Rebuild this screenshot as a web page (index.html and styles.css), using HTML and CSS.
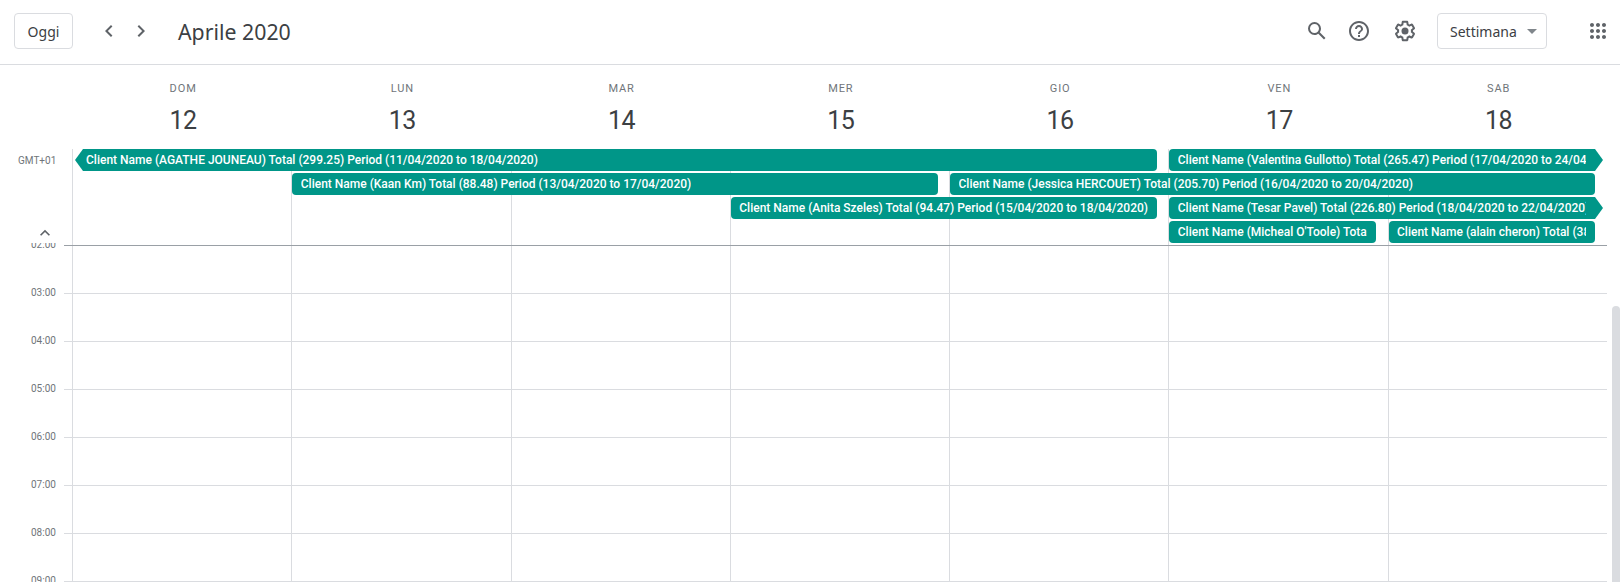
FILE: index.html
```html
<!DOCTYPE html>
<html lang="it">
<head>
<meta charset="utf-8">
<title>Calendario</title>
<link rel="stylesheet" href="styles.css">
</head>
<body>
<header class="toolbar">
  <button class="btn today">Oggi</button>
  <div class="nav">
    <svg class="nav-icon" viewBox="0 0 24 24"><path d="M15.41 7.41L14 6l-6 6 6 6 1.41-1.41L10.83 12z"/></svg>
    <svg class="nav-icon" viewBox="0 0 24 24"><path d="M10 6L8.59 7.41 13.17 12l-4.58 4.59L10 18l6-6z"/></svg>
  </div>
  <h1 class="title">Aprile 2020</h1>
  <div class="tools">
    <svg class="tool" viewBox="0 0 24 24"><path d="M20.49 19l-5.73-5.73C15.53 12.2 16 10.91 16 9.5A6.5 6.5 0 1 0 9.5 16c1.41 0 2.7-.47 3.77-1.24L19 20.49 20.49 19zM5 9.5C5 7.01 7.01 5 9.5 5S14 7.01 14 9.5 11.99 14 9.5 14 5 11.99 5 9.5z"/></svg>
    <svg class="tool tool-help" viewBox="0 0 24 24"><path d="M11 18h2v-2h-2v2zm1-16C6.48 2 2 6.48 2 12s4.48 10 10 10 10-4.48 10-10S17.52 2 12 2zm0 18c-4.41 0-8-3.59-8-8s3.59-8 8-8 8 3.59 8 8-3.59 8-8 8zm0-14c-2.21 0-4 1.79-4 4h2c0-1.1.9-2 2-2s2 .9 2 2c0 2-3 1.75-3 5h2c0-2.25 3-2.5 3-5 0-2.21-1.79-4-4-4z"/></svg>
    <svg class="tool" viewBox="0 0 24 24"><path d="M13.85 22.25h-3.7c-.74 0-1.36-.54-1.45-1.27l-.27-1.89c-.27-.14-.53-.29-.79-.46l-1.8.72c-.7.26-1.47-.03-1.81-.65L2.2 15.53c-.35-.66-.2-1.44.36-1.88l1.53-1.19c-.01-.15-.02-.3-.02-.46 0-.15.01-.31.02-.46l-1.52-1.19c-.59-.45-.74-1.26-.37-1.88l1.85-3.19c.34-.62 1.11-.9 1.79-.63l1.81.73c.26-.17.52-.32.78-.46l.27-1.91c.09-.7.71-1.25 1.44-1.25h3.7c.74 0 1.36.54 1.45 1.27l.27 1.89c.27.14.53.29.79.46l1.8-.72c.71-.26 1.48.03 1.82.65l1.84 3.18c.36.66.2 1.44-.36 1.88l-1.52 1.19c.01.15.02.3.02.46s-.01.31-.02.46l1.52 1.19c.56.45.72 1.23.37 1.86l-1.86 3.22c-.34.62-1.11.9-1.8.63l-1.8-.72c-.26.17-.52.32-.78.46l-.27 1.91c-.1.68-.72 1.22-1.45 1.22zm-3.23-2h2.76l.37-2.55.53-.22c.44-.18.88-.44 1.34-.78l.45-.34 2.38.96 1.38-2.4-2.03-1.58.07-.56c.03-.26.06-.51.06-.78s-.03-.53-.06-.78l-.07-.56 2.03-1.58-1.39-2.4-2.39.96-.45-.35c-.42-.32-.87-.58-1.33-.77l-.52-.22-.37-2.55h-2.76l-.37 2.55-.53.21c-.44.19-.88.44-1.34.79l-.45.33-2.38-.95-1.39 2.39 2.03 1.58-.07.56a7 7 0 0 0-.06.79c0 .26.02.53.06.78l.07.56-2.03 1.58 1.38 2.4 2.39-.96.45.35c.43.33.86.58 1.33.77l.53.22.38 2.55z"/><circle cx="12" cy="12" r="3.5"/></svg>
  </div>
  <button class="btn view"><span>Settimana</span><i class="caret"></i></button>
  <svg class="apps" viewBox="0 0 24 24"><path d="M6 8c1.1 0 2-.9 2-2s-.9-2-2-2-2 .9-2 2 .9 2 2 2zm6 12c1.1 0 2-.9 2-2s-.9-2-2-2-2 .9-2 2 .9 2 2 2zm-6 0c1.1 0 2-.9 2-2s-.9-2-2-2-2 .9-2 2 .9 2 2 2zm0-6c1.1 0 2-.9 2-2s-.9-2-2-2-2 .9-2 2 .9 2 2 2zm6 0c1.1 0 2-.9 2-2s-.9-2-2-2-2 .9-2 2 .9 2 2 2zm4-8c0 1.1.9 2 2 2s2-.9 2-2-.9-2-2-2-2 .9-2 2zm-4 2c1.1 0 2-.9 2-2s-.9-2-2-2-2 .9-2 2 .9 2 2 2zm6 6c1.1 0 2-.9 2-2s-.9-2-2-2-2 .9-2 2 .9 2 2 2zm0 6c1.1 0 2-.9 2-2s-.9-2-2-2-2 .9-2 2 .9 2 2 2z"/></svg>
</header>

<section class="days">
  <div class="day"><span class="dow">DOM</span><span class="num">12</span></div>
  <div class="day"><span class="dow">LUN</span><span class="num">13</span></div>
  <div class="day"><span class="dow">MAR</span><span class="num">14</span></div>
  <div class="day"><span class="dow">MER</span><span class="num">15</span></div>
  <div class="day"><span class="dow">GIO</span><span class="num">16</span></div>
  <div class="day"><span class="dow">VEN</span><span class="num">17</span></div>
  <div class="day"><span class="dow">SAB</span><span class="num">18</span></div>
</section>

<section class="allday">
  <div class="gutter">
    <span class="tz">GMT+01</span>
    <svg class="collapse" viewBox="0 0 24 24"><path d="M12 8l-6 6 1.41 1.41L12 10.83l4.59 4.58L18 14z"/></svg>
  </div>
  <div class="events">
    <div class="col c1"></div><div class="col c2"></div><div class="col c3"></div><div class="col c4"></div><div class="col c5"></div><div class="col c6"></div><div class="col c7"></div>
    <div class="ev from-prev r1 s1 e6"><span>Client Name (AGATHE JOUNEAU) Total (299.25) Period (11/04/2020 to 18/04/2020)</span></div>
    <div class="ev to-next r1 s6 e8"><span>Client Name (Valentina Gullotto) Total (265.47) Period (17/04/2020 to 24/04/2020)</span></div>
    <div class="ev r2 s2 e5"><span>Client Name (Kaan Km) Total (88.48) Period (13/04/2020 to 17/04/2020)</span></div>
    <div class="ev r2 s5 e8"><span>Client Name (Jessica HERCOUET) Total (205.70) Period (16/04/2020 to 20/04/2020)</span></div>
    <div class="ev r3 s4 e6"><span>Client Name (Anita Szeles) Total (94.47) Period (15/04/2020 to 18/04/2020)</span></div>
    <div class="ev to-next r3 s6 e8"><span>Client Name (Tesar Pavel) Total (226.80) Period (18/04/2020 to 22/04/2020)</span></div>
    <div class="ev r4 s6 e7"><span>Client Name (Micheal O'Toole) Total (120.00) Period (17/04/2020 to 18/04/2020)</span></div>
    <div class="ev r4 s7 e8"><span>Client Name (alain cheron) Total (385.00) Period (18/04/2020 to 19/04/2020)</span></div>
  </div>
</section>

<section class="timeline">
  <div class="hours">
    <span class="hour first">02:00</span>
    <span class="hour">03:00</span>
    <span class="hour">04:00</span>
    <span class="hour">05:00</span>
    <span class="hour">06:00</span>
    <span class="hour">07:00</span>
    <span class="hour">08:00</span>
    <span class="hour">09:00</span>
  </div>
  <div class="grid">
    <div class="gcol"></div><div class="gcol"></div><div class="gcol"></div><div class="gcol"></div><div class="gcol"></div><div class="gcol"></div><div class="gcol"></div>
  </div>
  <div class="thumb"></div>
</section>
</body>
</html>
```
FILE: styles.css
```css
* { box-sizing: border-box; }
body {
  margin: 0;
  height: 582px;
  overflow: hidden;
  background: #fff;
  color: #3c4043;
  font-family: Roboto, "Liberation Sans", sans-serif;
}
.toolbar {
  display: flex;
  align-items: center;
  height: 65px;
  padding: 0 0 2px 14px;
  border-bottom: 1px solid #dadce0;
}
.btn {
  display: flex;
  align-items: center;
  height: 36px;
  background: #fff;
  border: 1px solid #dadce0;
  border-radius: 4px;
  color: #3c4043;
  font: 400 14px "Noto Sans", Roboto, sans-serif;
  padding: 0;
}
.today { width: 59px; justify-content: center; }
.nav { display: flex; gap: 8px; margin-left: 24px; }
.nav-icon { width: 24px; height: 24px; fill: #5f6368; }
.title {
  margin: 0 0 0 25px;
  font: 400 21.3px "Noto Sans", Roboto, sans-serif;
  color: #3c4043;
}
.tools { display: flex; gap: 20px; margin-left: auto; margin-right: 20px; }
.tool { width: 24px; height: 24px; fill: #5f6368; }
.tool-help { margin: 0 2px 0 -2px; }
.view { width: 110px; padding: 0 9px 0 12px; justify-content: space-between; }
.caret {
  width: 0;
  height: 0;
  border-left: 5px solid transparent;
  border-right: 5px solid transparent;
  border-top: 5px solid #80868b;
}
.apps { width: 24px; height: 24px; fill: #5f6368; margin-left: 39px; margin-right: 10px; }

.days {
  display: grid;
  grid-template-columns: repeat(7, 219.25px);
  padding-left: 72px;
  height: 84px;
}
.day { display: flex; flex-direction: column; align-items: center; padding: 18px 0 0 3px; }
.dow { font-size: 11px; font-weight: 400; letter-spacing: .9px; line-height: 12px; color: #70757a; }
.num { font-size: 25px; letter-spacing: -.5px; line-height: 32px; margin-top: 10px; color: #3c4043; }

.allday { display: flex; height: 97px; margin-right: 12px; }
.gutter { width: 72px; position: relative; flex: none; }
.tz { position: absolute; left: 18px; top: 5px; font-size: 10px; line-height: 14px; color: #70757a; }
.collapse { position: absolute; left: 35px; top: 74px; width: 20px; height: 20px; fill: #5f6368; }
.events {
  display: grid;
  grid-template-columns: repeat(7, 219.25px);
  grid-template-rows: repeat(4, 22px);
  row-gap: 2px;
  align-content: start;
  height: 97px;
  position: relative;
}
.events::after {
  content: "";
  position: absolute;
  left: -8px;
  right: 0;
  bottom: 0;
  height: 1px;
  background: #9aa0a6;
}
.col { grid-row: 1 / 6; border-left: 1px solid #dadce0; margin-bottom: -3px; }
.c1 { grid-column: 1; } .c2 { grid-column: 2; } .c3 { grid-column: 3; } .c4 { grid-column: 4; }
.c5 { grid-column: 5; } .c6 { grid-column: 6; } .c7 { grid-column: 7; }
.ev {
  position: relative;
  display: flex;
  align-items: center;
  min-width: 0;
  height: 22px;
  margin: 0 11.5px 0 1px;
  padding: 0 9px 0 8.5px;
  background: #009688;
  border-radius: 4px;
  color: #fff;
  font-size: 12px;
  font-weight: 500;
  line-height: 22px;
  white-space: nowrap;
}
.ev span { display: block; overflow: hidden; min-width: 0; }
.from-prev { margin-left: 11px; padding-left: 3px; border-radius: 0 4px 4px 0; }
.from-prev::before {
  content: "";
  position: absolute;
  left: -8px;
  top: 0;
  border-top: 11px solid transparent;
  border-bottom: 11px solid transparent;
  border-right: 8px solid #009688;
}
.to-next { border-radius: 4px 0 0 4px; }
.to-next::after {
  content: "";
  position: absolute;
  right: -8px;
  top: 0;
  border-top: 11px solid transparent;
  border-bottom: 11px solid transparent;
  border-left: 8px solid #009688;
}
.r1 { grid-row: 1; } .r2 { grid-row: 2; } .r3 { grid-row: 3; } .r4 { grid-row: 4; }
.s1 { grid-column-start: 1; } .s2 { grid-column-start: 2; } .s4 { grid-column-start: 4; }
.s5 { grid-column-start: 5; } .s6 { grid-column-start: 6; } .s7 { grid-column-start: 7; }
.e5 { grid-column-end: 5; } .e6 { grid-column-end: 6; } .e7 { grid-column-end: 7; } .e8 { grid-column-end: 8; }

.timeline { position: relative; display: flex; height: 339px; margin-top: -3px; overflow: hidden; }
.hours { width: 72px; flex: none; }
.hour {
  display: block;
  height: 48px;
  font-size: 10px;
  line-height: 16px;
  color: #70757a;
  padding-left: 31px;
}
.hour.first { margin-top: -6px; }
.grid {
  display: grid;
  grid-template-columns: repeat(7, 219.25px);
  height: 336px;
  margin-top: 3px;
  background: repeating-linear-gradient(to bottom, transparent 0, transparent 47px, #dadce0 47px, #dadce0 48px);
  position: relative;
}
.grid::before {
  content: "";
  position: absolute;
  left: -8px;
  width: 8px;
  top: 0;
  height: 100%;
  background: repeating-linear-gradient(to bottom, transparent 0, transparent 47px, #dadce0 47px, #dadce0 48px);
}
.gcol { border-left: 1px solid #dadce0; }
.thumb {
  position: absolute;
  right: 0;
  top: 63px;
  bottom: 0;
  width: 8px;
  background: #dadce0;
  border-radius: 4px 4px 0 0;
}
```
